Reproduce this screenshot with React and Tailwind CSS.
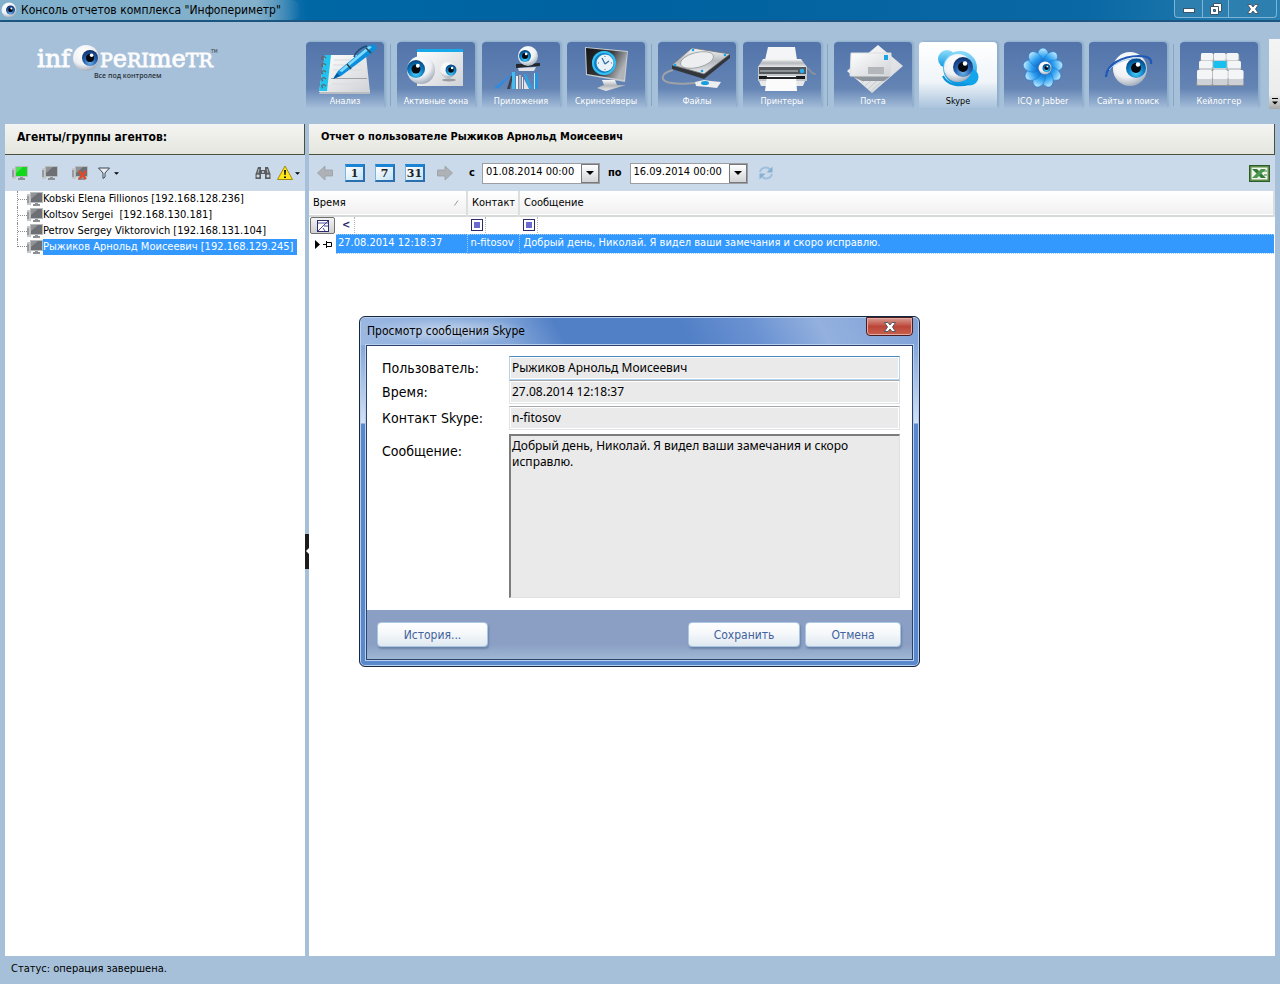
import React, { useState } from 'react'
import clsx from 'clsx'

const agents = [
  'Kobski Elena Fillionos [192.168.128.236]',
  'Koltsov Sergei  [192.168.130.181]',
  'Petrov Sergey Viktorovich [192.168.131.104]',
  'Рыжиков Арнольд Моисеевич [192.168.129.245]',
]

// Shared gradients for all the drawings
const Gradients = () => (
  <svg className="absolute w-0 h-0" aria-hidden="true">
    <defs>
      <radialGradient id="ball" cx="0.4" cy="0.3" r="0.75">
        <stop offset="0" stopColor="#ffffff" />
        <stop offset="0.6" stopColor="#eef0f3" />
        <stop offset="1" stopColor="#98a4b4" />
      </radialGradient>
      <radialGradient id="iris" cx="0.5" cy="0.75" r="0.75">
        <stop offset="0" stopColor="#4fd0f8" />
        <stop offset="0.5" stopColor="#0c82c8" />
        <stop offset="1" stopColor="#063f78" />
      </radialGradient>
      <radialGradient id="irisDark" cx="0.5" cy="0.8" r="0.8">
        <stop offset="0" stopColor="#6aaee8" />
        <stop offset="0.5" stopColor="#2560ac" />
        <stop offset="1" stopColor="#0e2d68" />
      </radialGradient>
      <linearGradient id="paper" x1="0" y1="0" x2="1" y2="1">
        <stop offset="0" stopColor="#ffffff" />
        <stop offset="1" stopColor="#cfd2d6" />
      </linearGradient>
      <linearGradient id="metal" x1="0" y1="0" x2="0" y2="1">
        <stop offset="0" stopColor="#fafafa" />
        <stop offset="0.5" stopColor="#b4b8bc" />
        <stop offset="1" stopColor="#e8eaec" />
      </linearGradient>
      <linearGradient id="screen" x1="0" y1="0" x2="1" y2="0.4">
        <stop offset="0" stopColor="#101214" />
        <stop offset="0.6" stopColor="#3a3d40" />
        <stop offset="1" stopColor="#b0b4b8" />
      </linearGradient>
      <linearGradient id="blue" x1="0" y1="0" x2="0" y2="1">
        <stop offset="0" stopColor="#8fdcfa" />
        <stop offset="1" stopColor="#0796e2" />
      </linearGradient>
      <linearGradient id="petal" x1="0" y1="0" x2="0" y2="1">
        <stop offset="0" stopColor="#c4ecff" />
        <stop offset="0.5" stopColor="#2c9ff0" />
        <stop offset="1" stopColor="#0c58b8" />
      </linearGradient>
    </defs>
  </svg>
)

const Eye = ({ x, y, r, dx = 0, dy = 0, ir, dark }) => (
  <g>
    <circle cx={x} cy={y} r={r} fill="url(#ball)" />
    <circle cx={x + dx} cy={y + dy} r={ir} fill={dark ? 'url(#irisDark)' : 'url(#iris)'} />
    <circle cx={x + dx} cy={y + dy} r={ir * 0.5} fill="#06090f" />
    <circle cx={x + dx + ir * 0.2} cy={y + dy - ir * 0.35} r={ir * 0.22} fill="#fff" />
  </g>
)

const NotebookIcon = () => (
  <g>
    <path d="M15 47 L64 47 L64 51 L13 51 Z" fill="#b9bcc0" />
    <path d="M19 12 L60 12 L64 49 L13 49 Z" fill="url(#paper)" />
    <path d="M19 12 H25 L21 48 H13 Z" fill="#1fc3ee" />
    <path d="M28 17H54M27 22H55M27 27H56M26 41H58" stroke="#d8dbdf" strokeWidth="1" />
    <path d="M25 35.500H61" stroke="#9ea2a6" />
    {[15, 22, 29, 36, 43].map((y) => (
      <path key={y} d={`M20 ${y} c-3 -3 -6 0 -3 2`} fill="none" stroke="#5f656b" strokeWidth="1.300" />
    ))}
    <path d="M27 36 L32 28 L62 3 L68 1 L71 5 L67 9 L35 33 Z" fill="#0b8fdd" />
    <path d="M33 28 L63 3 L66 4 L36 29 Z" fill="#7fdcff" />
    <path d="M27 36 L31 30 L34 33 Z" fill="#085a9e" />
    <path d="M41 21 L45 26 M60 5 L65 10" stroke="#34404c" strokeWidth="1.500" />
    <path d="M48 14 C50 8 56 4 61 3" stroke="#1d4c78" strokeWidth="1.500" fill="none" />
  </g>
)

const WindowsIcon = () => (
  <g>
    <rect x="20" y="6" width="46" height="37" fill="url(#paper)" />
    <rect x="20" y="6" width="46" height="3" fill="#17a9ea" />
    <ellipse cx="52" cy="37" rx="7" ry="1.500" fill="#9a9da1" />
    <Eye x={24} y={27} r={14} dx={-5} dy={-1} ir={9} />
    <Eye x={51} y={27} r={8} dx={3} ir={5.5} />
  </g>
)

const AppsIcon = () => (
  <g>
    <path d="M34 21 L58 20 L58 23 L34 25 Z" fill="#23272c" />
    <path d="M36 25 L54 24 L52 28 L37 28 Z" fill="#e0e2e5" />
    <Eye x={46} y={13} r={10} dx={-3} ir={6} />
    <path d="M30 30 L32 29 L17 45 L13 46 L13 44 Z" fill="#2f8be0" />
    <path d="M25 46 L29 33 L31 33 L28 46 Z" fill="#3a3f48" />
    <path d="M30 29 H33 V46 H30 Z" fill="#43bdf0" />
    <path d="M34 33 H36 V46 H34 Z" fill="#f1f3f5" />
    <path d="M37 32 H39 V46 H37 Z" fill="#c7b7ad" />
    <path d="M40 34 H41 V46 H40 Z" fill="#f1f3f5" />
    <path d="M42 31 L44 31 L50 45 L47 46 Z" fill="#2aa4e8" />
    <path d="M42 36 L47 46 L42 46 Z" fill="#dfe3e8" />
    <path d="M52 30 H56 V46 H52 Z" fill="#2494dc" />
    <path d="M52 30 H53 V46 H52 Z" fill="#bfe9fb" />
  </g>
)

const ScreenIcon = () => (
  <g>
    <path d="M35 37 L48 37 L50 42 L59 42 L39 48 L30 45 L37 42 Z" fill="url(#metal)" />
    <path d="M18 4 L61 8 L58 39 L19 32 Z" fill="#c9ccd0" />
    <path d="M19 5 L60 9 L57 37 L20 31 Z" fill="url(#screen)" />
    <circle cx="37" cy="20" r="12" fill="#0e7fc4" />
    <circle cx="37" cy="20" r="11" fill="none" stroke="#36c0f2" strokeWidth="2" />
    <circle cx="38" cy="20" r="8.500" fill="#e9f2f8" />
    <path d="M38 21 L35 15 M38 21 L42 18" stroke="#2f6ca0" strokeWidth="1.300" />
    <path d="M38 13V14M38 26V27M31 20H32M44 20H45" stroke="#5c6b78" />
  </g>
)

const DriveIcon = () => (
  <g>
    <path d="M15 27 C2 30 1 39 14 40 C24 42 29 40 38 40" fill="none" stroke="#9fa3a8" strokeWidth="2" />
    <path d="M14 22 L46 30 L72 11 V15 L46 36 L14 26 Z" fill="#33373b" />
    <path d="M34 5 L72 11 L46 31 L14 22 Z" fill="url(#metal)" />
    <path d="M34 5 L72 11 L46 31 L14 22 Z" fill="none" stroke="#6e7378" strokeWidth="0.800" />
    <ellipse cx="39" cy="17" rx="17" ry="7.500" fill="#eceeef" stroke="#8e9296" strokeWidth="0.700" transform="rotate(-14 39 17)" />
    <circle cx="35" cy="7" r="1.300" fill="#15a5ea" />
    <circle cx="67" cy="12" r="1.300" fill="#15a5ea" />
    <circle cx="17" cy="22" r="1.300" fill="#15a5ea" />
    <circle cx="44" cy="28" r="1.300" fill="#15a5ea" />
    <path d="M37 39 L46 37 L53 38 L63 39 L59 45 L50 44 L38 43 Z" fill="#eceef0" />
    <ellipse cx="47" cy="40" rx="4" ry="2" fill="#169fe0" />
  </g>
)

const PrinterIcon = () => (
  <g>
    <path d="M62 27 C68 22 66 32 73 31" fill="none" stroke="#8c939b" strokeWidth="1.500" />
    <path d="M25 4 H52 L54 17 H22 Z" fill="#f4f5f6" />
    <path d="M20 16 H58 L64 24 H15 Z" fill="url(#metal)" />
    <path d="M15 24 H64 V38 H15 Z" fill="#c4c7ca" />
    <path d="M16 24 H63 V31 H16 Z" fill="#53575b" />
    <path d="M17 27 H55 V29 H17 Z" fill="#8d9296" />
    <circle cx="59" cy="28" r="2.200" fill="#25b0f0" />
    <path d="M16 33 H24 V36 H16 Z M53 33 H62 V36 H53 Z" fill="#17191b" />
    <path d="M16 38 H62 L60 43 H18 Z" fill="#e6e8ea" />
    <path d="M24 33 H53 L54 48 H22 Z" fill="#fbfbfc" />
    <path d="M23 34 H54 V36 H23 Z" fill="#24272a" />
  </g>
)

const MailIcon = () => (
  <g>
    <path d="M44 2 L69 23 L38 50 L13 28 Z" fill="url(#paper)" />
    <path d="M28 40L35 33M31 43L41 34M34 46L47 34M37 48L53 34" stroke="#c9ccd0" />
    <path d="M17 33 H57 L50 38 H28 Z" fill="#8f959c" />
    <path d="M17 10 H57 V33 H16 Z" fill="url(#paper)" />
    <path d="M17 10 H57 V33 H16 Z" fill="none" stroke="#dcdfe2" />
    <rect x="50" y="12" width="4" height="5" fill="#1aa5e6" />
    <rect x="34" y="24" width="16" height="7" fill="#b3b7bb" />
  </g>
)

const SkypeIcon = () => (
  <g>
    <circle cx="28" cy="16" r="9" fill="url(#blue)" />
    <circle cx="41" cy="25" r="17" fill="url(#blue)" />
    <circle cx="51" cy="34" r="8.500" fill="#12a5ec" />
    <path d="M24 33 C28 42 40 44 50 41" stroke="#0b93da" strokeWidth="2" fill="none" />
    <Eye x={39} y={25} r={14} dx={5} dy={-1} ir={10} dark />
  </g>
)

const FlowerIcon = () => (
  <g>
    {[0, 40, 80, 120, 160, 200, 240, 280, 320].map((a) => (
      <ellipse key={a} cx="39" cy="14" rx="6" ry="9" fill="url(#petal)" stroke="#1a78cc" strokeWidth="0.500" transform={`rotate(${a} 39 25)`} />
    ))}
    <Eye x={41} y={25} r={6.5} dx={1.5} ir={4} />
  </g>
)

const BrowserIcon = () => (
  <g>
    <Eye x={41} y={26} r={17} dx={6} dy={-1} ir={10} />
    <path d="M17 34 C17 22 33 13 50 13 C58 13 63 15 62 21" fill="none" stroke="#1e58b4" strokeWidth="2.200" />
    <path d="M20 27 C26 19 40 15 52 15" fill="none" stroke="#9cc8f4" strokeWidth="0.900" />
  </g>
)

const KeyboardIcon = () => (
  <g>
    <path d="M21 11 H59 L64 43 H16 Z" fill="#8d9399" />
    {[0, 1, 2].map((row) => [0, 1, 2].map((col) => {
      const w = 12 + row * 1.5
      const x = 21 - row * 2 + col * (w + 0.7)
      const y = 10 + row * 8 + (row === 2 ? 1 : 0)
      return (
        <g key={row + '-' + col}>
          <rect x={x} y={y} width={w} height={row === 2 ? 15 : 9} rx="1.500" fill="#cdd0d4" />
          <rect x={x} y={y} width={w} height={row === 2 ? 9 : 7} rx="1.500" fill={row === 1 && col === 1 ? '#19c0ee' : '#f4f5f6'} />
        </g>
      )
    }))}
  </g>
)

const groups = [
  [{ name: 'Анализ', Icon: NotebookIcon }],
  [
    { name: 'Активные окна', Icon: WindowsIcon },
    { name: 'Приложения', Icon: AppsIcon },
    { name: 'Скринсейверы', Icon: ScreenIcon },
  ],
  [
    { name: 'Файлы', Icon: DriveIcon },
    { name: 'Принтеры', Icon: PrinterIcon },
  ],
  [
    { name: 'Почта', Icon: MailIcon },
    { name: 'Skype', Icon: SkypeIcon },
    { name: 'ICQ и Jabber', Icon: FlowerIcon },
    { name: 'Сайты и поиск', Icon: BrowserIcon },
  ],
  [{ name: 'Кейлоггер', Icon: KeyboardIcon }],
]

const Computer = ({ screen = '#6c6f73', cross }) => (
  <svg className="w-4 h-4 shrink-0" viewBox="0 0 16 16" aria-hidden="true">
    <path d="M0 3H4V14H0Z" fill="#c5c8ca" />
    <path d="M1 5V12" stroke="#6d7174" />
    <rect x="3" y="1" width="13" height="11" fill="#b9bcbe" />
    <rect x="4" y="2" width="11" height="9" fill={screen} />
    <path d="M4 2H11L4 8Z" fill="#fff" opacity="0.250" />
    <path d="M8 12H11V13H13V15H6V13H8Z" fill="#8e9194" />
    {cross && <path d="M7 6L14 14M14 6L7 14" stroke="#e04a2c" strokeWidth="2.400" />}
  </svg>
)

const Caret = ({ className }) => (
  <svg className={clsx('shrink-0', className)} viewBox="0 0 6 3" aria-hidden="true">
    <path d="M0 0H6L3 3Z" fill="#000" />
  </svg>
)

const BigArrow = ({ flip }) => (
  <svg className={clsx('w-4 h-4', flip && 'rotate-180')} viewBox="0 0 16 16" aria-hidden="true">
    <path d="M0.500 8L8 1V5H15.500V11H8V15Z" fill="#aeb2b6" stroke="#9ba0a5" strokeWidth="0.800" />
  </svg>
)

const CalendarButton = ({ days }) => (
  <button className="w-5 h-[18px] border border-[#7cb4dc] border-t-[3px] border-t-[#1c84d2] border-r-2 border-r-[#2b6fae] border-b-2 border-b-[#2b6fae] bg-gradient-to-br from-white to-[#c2e2f6] font-['DejaVu_Serif',serif] font-bold text-[11px] leading-[13px] text-[#222]">
    {days}
  </button>
)

const DateBox = ({ id, value }) => (
  <div className="flex w-[118px] h-[21px] border border-[#9b9fa4] bg-white">
    <input id={id} defaultValue={value} className="min-w-0 flex-1 pl-[3px] pb-px outline-none" />
    <button aria-label="Открыть календарь" className="w-[18px] border border-[#77797c] bg-gradient-to-b from-white to-[#d2d4d6] flex items-center justify-center">
      <Caret className="w-2 h-1" />
    </button>
  </div>
)

const FilterMark = () => (
  <svg className="w-3 h-3" viewBox="0 0 12 12" aria-hidden="true">
    <rect x="0.500" y="0.500" width="11" height="11" fill="#fff" stroke="#2c2c6c" />
    <rect x="3" y="3" width="6" height="6" fill="#6a6ad0" />
  </svg>
)

const Logo = () => (
  <svg className="w-[190px] h-10" viewBox="0 0 190 40" role="img" aria-label="Инфопериметр">
    <g fill="#ffffff" stroke="#fafafa" strokeWidth="0.900" fontFamily="'DejaVu Serif', serif">
      <text x="1" y="26" fontSize="25">inf</text>
      <text x="64" y="26" fontSize="19">
        P<tspan fontSize="24">e</tspan>RI<tspan fontSize="24">me</tspan>TR
      </text>
    </g>
    <Eye x={50} y={17} r={13} dx={4} ir={8} dark />
    <text x="175" y="12" fontSize="5" fontFamily="'DejaVu Sans Condensed', sans-serif" fill="#333">TM</text>
    <text x="58" y="37" fontSize="7" fontFamily="'Open Sans', sans-serif" fontWeight="600" fill="#2b3038">Все под контролем</text>
  </svg>
)

const TitleBar = () => (
  <header className="flex items-start h-[22px] bg-[linear-gradient(to_right,#4d94be_0%,#3c86b4_20%,#0067a5_24%,#0062a0_50%,#0a68a4_85%,#2a80b0_100%)] border-b-2 border-b-[#1c5680]">
    <div className="flex items-center h-5 pl-px gap-1 pr-5 bg-[linear-gradient(to_right,#80b0cc,#83b0cb_85%,transparent)] rounded-r-full text-[12px] text-black">
      <svg className="w-4 h-4" viewBox="0 0 16 16" aria-hidden="true">
        <Eye x={8} y={8} r={7.5} dx={1.5} ir={4.5} dark />
      </svg>
      <h1>Консоль отчетов комплекса "Инфопериметр"</h1>
    </div>
    <div className="ml-auto mr-[3px] flex h-[18px] border border-t-0 border-[#7fb4d4] rounded-b-[4px] divide-x divide-[#7fb4d4] bg-[#2d7fb0]">
      <button aria-label="Свернуть" className="w-7 flex items-center justify-center">
        <svg className="w-3 h-4" viewBox="0 0 12 16"><rect x="0.500" y="7.500" width="11" height="4" fill="#fff" stroke="#3d5468" /></svg>
      </button>
      <button aria-label="Восстановить" className="w-[26px] flex items-center justify-center">
        <svg className="w-3 h-4" viewBox="0 0 12 16">
          <path d="M3.500 2.500H11.500V10.500H3.500Z" fill="#fff" stroke="#3d5468" />
          <path d="M0.500 5.500H8.500V13.500H0.500Z" fill="#fff" stroke="#3d5468" />
          <path d="M3.500 8.500H5.500V10.500H3.500Z" fill="#2d7fb0" stroke="#3d5468" />
        </svg>
      </button>
      <button aria-label="Закрыть" className="w-[47px] flex items-center justify-center">
        <CloseGlyph />
      </button>
    </div>
  </header>
)

const CloseGlyph = () => (
  <svg className="w-3 h-2.5" viewBox="0 0 12 10" aria-hidden="true">
    <path d="M0.500 0.500H4L6 3L8 0.500H11.500L8.500 5L11.500 9.500H8L6 7L4 9.500H0.500L3.500 5Z" fill="#fff" stroke="#46525e" strokeWidth="0.900" />
  </svg>
)

const MainMenu = ({ active, onSelect }) => (
  <div className="flex items-start h-[102px] pt-[17px]">
    <div className="w-[306px] shrink-0 pl-9 pt-0.5">
      <Logo />
    </div>
    <nav className="flex gap-1.5 pt-[3px]">
      {groups.map((group, i) => (
        <React.Fragment key={i}>
          {i > 0 && <div className="w-px h-[62px] mt-0.5 bg-[#85a5c5]" />}
          <div className="flex gap-[7px]">
            {group.map(({ name, Icon }) => (
              <button
                key={name}
                onClick={() => onSelect(name)}
                className={clsx(
                  'w-[78px] h-[66px] rounded-t-[4px] text-[9px] leading-3 bg-gradient-to-b shadow-[2px_-1px_2px_#8fadca]',
                  active === name
                    ? 'from-white via-[#f0f5f9] via-60% to-[#a9c3dc] text-black'
                    : 'from-[#5274aa] via-[#6484b4] via-70% to-[#a4bdd8] text-white'
                )}
              >
                <svg className="block w-[78px] h-[52px]" viewBox="0 0 78 52" aria-hidden="true">
                  <Icon />
                </svg>
                <span className="block whitespace-nowrap">{name}</span>
              </button>
            ))}
          </div>
        </React.Fragment>
      ))}
    </nav>
    <button aria-label="Ещё" className="ml-auto w-[11px] h-[70px] bg-gradient-to-b from-[#f4f4f4] via-[#ececec] via-80% to-[#a8a8a8] flex flex-col items-center justify-end gap-0.5 pb-1">
      <span className="w-1.5 h-px bg-black" />
      <Caret className="w-1.5 h-1" />
    </button>
  </div>
)

const PanelTitle = ({ className, children }) => (
  <h2 className={clsx('h-[31px] pl-3 pb-1 flex items-center bg-gradient-to-b from-[#f4f4f2] to-[#e4e6de] border-b border-r border-[#4c503c] font-bold text-black', className)}>
    {children}
  </h2>
)

const AgentsPanel = () => {
  const [selected, setSelected] = useState(3)

  return (
    <aside className="w-[300px] shrink-0 flex flex-col bg-white">
      <PanelTitle className="text-[12px]">Агенты/группы агентов:</PanelTitle>
      <div className="flex items-center h-9 pl-[7px] pr-[5px] bg-[#cbdaea]">
        <div className="flex gap-3.5">
          <button aria-label="Включенные"><Computer screen="#12d81c" /></button>
          <button aria-label="Выключенные"><Computer /></button>
          <button aria-label="Удалить"><Computer cross /></button>
        </div>
        <button aria-label="Фильтр" className="ml-2.5 flex items-center gap-1">
          <svg className="w-3 h-3" viewBox="0 0 12 12" aria-hidden="true">
            <path d="M0.500 1H11.500L7 6V10L5 11.500V6Z" fill="#e8eef4" stroke="#3d4650" />
          </svg>
          <Caret className="w-[5px] h-[3px]" />
        </button>
        <button aria-label="Поиск" className="ml-auto mr-1.5">
          <svg className="w-4 h-4" viewBox="0 0 16 16" aria-hidden="true">
            <path d="M3 2H6V5H10V2H13L15.500 9V14H10V9H6V14H0.500V9Z" fill="#5a5e62" />
            <path d="M2 10H4V12H2Z M12 10H14V12H12Z M4 4L3 8M12 4L13 8" fill="#e3e6e8" stroke="#c9cdd1" strokeWidth="0.800" />
            <circle cx="8" cy="7" r="1" fill="#d7dade" />
          </svg>
        </button>
        <button aria-label="Предупреждения" className="flex items-center gap-0.5">
          <svg className="w-4 h-4" viewBox="0 0 16 16" aria-hidden="true">
            <path d="M8 1L15.500 14.500H0.500Z" fill="#ffe51e" stroke="#a08a10" strokeLinejoin="round" />
            <path d="M7 5H9L8.600 10H7.400Z M7 11.500H9V13H7Z" fill="#111" />
          </svg>
          <Caret className="w-[5px] h-[3px]" />
        </button>
      </div>
      <ul className="flex-1 pl-3 text-[11px]">
        {agents.map((agent, i) => (
          <li key={agent} className="flex items-center h-4">
            <span className={clsx('w-2.5 border-l border-dotted border-[#8c8c8c] flex', i === agents.length - 1 ? 'h-2 self-start items-end' : 'h-4 items-center')}>
              <span className="w-full border-t border-dotted border-[#8c8c8c]" />
            </span>
            <Computer />
            <button
              onClick={() => setSelected(i)}
              className={clsx('h-4 pr-1 whitespace-pre leading-[14px]', selected === i ? 'bg-[#3399ff] text-white' : 'text-black')}
            >
              {agent}
            </button>
          </li>
        ))}
      </ul>
    </aside>
  )
}

const ReportToolbar = () => (
  <div className="flex items-center h-9 pl-2 pr-[5px] bg-[#cbdaea] text-[11px] text-black">
    <button aria-label="Назад"><BigArrow /></button>
    <div className="flex gap-2.5 ml-3 mr-3">
      <CalendarButton days="1" />
      <CalendarButton days="7" />
      <CalendarButton days="31" />
    </div>
    <button aria-label="Вперед"><BigArrow flip /></button>
    <label htmlFor="from" className="ml-4 mr-[7px] font-bold">с</label>
    <DateBox id="from" value="01.08.2014 00:00" />
    <label htmlFor="to" className="mx-2 font-bold">по</label>
    <DateBox id="to" value="16.09.2014 00:00" />
    <button aria-label="Обновить" className="ml-2.5">
      <svg className="w-4 h-4" viewBox="0 0 16 16" fill="none" aria-hidden="true">
        <path d="M2 7C3 2.500 9 1 12 4.500M14 9C13 13.500 7 15 4 11.500" stroke="#9fc0dc" strokeWidth="2" />
        <path d="M14.500 1.500V7.500H8.500Z M1.500 14.500V8.500H7.500Z" fill="#86afd2" />
      </svg>
    </button>
    <button aria-label="Экспорт в Excel" className="ml-auto">
      <svg className="w-[21px] h-[17px]" viewBox="0 0 21 17" aria-hidden="true">
        <rect width="21" height="17" fill="#2c5c28" />
        <rect x="1" y="1" width="19" height="15" fill="#5d8a48" />
        <rect x="2.500" y="2.500" width="16" height="12" fill="#f0f6ec" />
        <path d="M3 4H8L17 13H12Z" fill="#2f7c3a" />
        <path d="M17 4H12L3 13H8Z" fill="#4c9850" />
        <path d="M14 6H18M15 10H18" stroke="#2f7c3a" />
      </svg>
    </button>
  </div>
)

const ReportTable = () => (
  <table className="w-full table-fixed border-collapse text-[11px] text-black">
    <colgroup>
      <col className="w-[27px]" />
      <col className="w-[131px]" />
      <col className="w-[52px]" />
      <col />
    </colgroup>
    <thead>
      <tr className="h-[25px] bg-gradient-to-b from-white to-[#f0f0f0] text-left border-b-2 border-b-[#d5dad8]">
        <th colSpan={2} className="font-normal pl-1 pr-1.5 border-r-2 border-r-[#dcdfde]">
          <button className="flex w-full items-center justify-between">
            Время
            <svg className="w-1.5 h-1.5" viewBox="0 0 6 6" aria-hidden="true">
              <path d="M0.500 5.500L4 0.500" stroke="#808080" strokeWidth="0.800" />
            </svg>
          </button>
        </th>
        <th className="font-normal pl-1 border-r-2 border-r-[#dcdfde] whitespace-nowrap">Контакт</th>
        <th className="font-normal pl-1 border-r-2 border-r-[#dcdfde]">Сообщение</th>
      </tr>
    </thead>
    <tbody>
      <tr className="h-[18px]">
        <td className="p-0">
          <button aria-label="Фильтр" className="ml-px w-[25px] h-[17px] flex items-center justify-center border border-[#707070] rounded-[2px] bg-gradient-to-b from-[#f4f4f4] to-[#d0d0d0]">
            <svg className="w-3 h-3" viewBox="0 0 12 12" aria-hidden="true">
              <rect x="0.500" y="0.500" width="11" height="11" fill="#fff" stroke="#2c2c6c" />
              <path d="M1 3H11M1 11L11 1M7 6H11M6 8L8 11" stroke="#4a4a9c" />
            </svg>
          </button>
        </td>
        <td className="p-0"><span className="block w-[19px] h-4 pl-1.5 leading-4 font-bold text-[#2c2c6c] border-r border-dotted border-[#b4b4b4]">&lt;</span></td>
        <td className="p-0"><span className="flex items-center w-[19px] h-4 pl-1 border-r border-dotted border-[#b4b4b4]"><FilterMark /></span></td>
        <td className="p-0"><span className="flex items-center w-[19px] h-4 pl-1 border-r border-dotted border-[#b4b4b4]"><FilterMark /></span></td>
      </tr>
      <tr className="h-[19px] text-white">
        <td className="p-0">
          <svg className="ml-[5px] w-[19px] h-2.5" viewBox="0 0 19 10" aria-hidden="true">
            <path d="M1 1L6 5.500L1 10Z" fill="#000" />
            <path d="M9 5.500H12M12.500 2V9M12.500 3.500H17.500V7.500H12.500" stroke="#000" fill="none" />
          </svg>
        </td>
        <td className="p-0 pl-0.5 whitespace-nowrap bg-[#3399ff] border-y border-r border-dotted border-[#9fcdfb]">27.08.2014 12:18:37</td>
        <td className="p-0 pl-[3px] whitespace-nowrap bg-[#3399ff] border-y border-r border-dotted border-[#9fcdfb]">n-fitosov</td>
        <td className="p-0 pl-1 bg-[#3399ff] border-y border-dotted border-[#9fcdfb]">Добрый день, Николай. Я видел ваши замечания и скоро исправлю.</td>
      </tr>
    </tbody>
  </table>
)

const DialogButton = ({ className, children }) => (
  <button className={clsx('h-[25px] rounded-[4px] border border-[#a9c6e2] bg-gradient-to-b from-white via-[#f4f7fa] to-[#dfe8f0] shadow-[1px_2px_2px_#6c83a8] text-[12px] text-[#41629c]', className)}>
    {children}
  </button>
)

const Field = ({ id, label, value, className, inputClass }) => (
  <div className={clsx('flex items-center', className)}>
    <label htmlFor={id} className="w-[127px] shrink-0 text-[14px]">{label}</label>
    <input
      id={id}
      readOnly
      defaultValue={value}
      className={clsx("flex-1 min-w-0 h-6 pl-0.5 pb-0.5 border bg-[#eaeaea] shadow-[inset_0_0_0_1px_#fff] font-['Noto_Sans',sans-serif] text-[12px] outline-none", inputClass)}
    />
  </div>
)

const MessageDialog = ({ onClose }) => (
  <div
    role="dialog"
    aria-labelledby="dialog-title"
    className="absolute left-[359px] top-[316px] w-[561px] px-1.5 pb-1.5 border border-[#17283e] rounded-[6px] shadow-[inset_0_0_0_1px_#b9d0ee] text-black bg-[linear-gradient(to_bottom,#8eb0de_0px,#86a8da_30px,#d3e1f4_106px,#5a88cc_107px)]"
  >
    <div className="-mx-[5px] mt-px px-[5px] h-[27px] flex items-start rounded-t-[5px] bg-[linear-gradient(60deg,#9cb8e2_0%,#86a9da_26%,#5280c6_36%,#5280c6_58%,#6a92d2_70%,#93b0de_82%,#80a2d8_100%)]">
      <h2 id="dialog-title" className="text-[12px] leading-[26px] -ml-[5px] px-1.5 rounded-full bg-[radial-gradient(closest-side,#c4d5ec,transparent)]">Просмотр сообщения Skype</h2>
      <button
        aria-label="Закрыть"
        onClick={onClose}
        className="ml-auto w-[47px] h-[19px] -mt-px flex items-center justify-center rounded-b-[4px] border border-[#4a1c20] bg-gradient-to-b from-[#d99a92] via-[#bb4538] via-50% to-[#c8604c] shadow-[inset_0_0_0_1px_#e2aaa2]"
      >
        <CloseGlyph />
      </button>
    </div>
    <div className="border border-[#2a426c] bg-white shadow-[0_0_0_1px_#b9d0ee]">
      <div className="pl-[15px] pr-3 pt-2.5 pb-3">
        <Field id="user" label="Пользователь:" value="Рыжиков Арнольд Моисеевич" inputClass="border-[#b4d4ec] border-t-[#4a8cbc]" />
        <Field id="time" label="Время:" value="27.08.2014 12:18:37" inputClass="border-[#e0e2e8] border-t-[#a8aab2]" />
        <Field id="contact" label="Контакт Skype:" value="n-fitosov" className="mt-0.5" inputClass="border-[#e0e2e8] border-t-[#a8aab2]" />
        <div className="flex mt-1">
          <label htmlFor="message" className="w-[127px] shrink-0 pt-[7px] text-[14px]">Сообщение:</label>
          <textarea
            id="message"
            readOnly
            defaultValue="Добрый день, Николай. Я видел ваши замечания и скоро исправлю."
            className="flex-1 min-w-0 h-[164px] pl-px pr-6 pt-0.5 resize-none border border-[#e0e0e0] border-t-2 border-t-[#7c7c7c] border-l-2 border-l-[#7c7c7c] bg-[#eaeaea] font-['Noto_Sans',sans-serif] text-[12px] leading-4 outline-none"
          />
        </div>
      </div>
      <div className="flex pl-2.5 pr-[11px] py-3 bg-gradient-to-b from-[#8b9fc4] via-[#8b9fc4] via-70% to-[#9fb8d4]">
        <DialogButton className="w-[111px]">История...</DialogButton>
        <DialogButton className="w-28 ml-auto mr-[5px]">Сохранить</DialogButton>
        <DialogButton className="w-24">Отмена</DialogButton>
      </div>
    </div>
  </div>
)

const App = () => {
  const [section, setSection] = useState('Skype')
  const [dialogOpen, setDialogOpen] = useState(true)

  return (
    <div className="relative min-h-screen flex flex-col bg-[#a6c0da] font-['DejaVu_Sans_Condensed','DejaVu_Sans',sans-serif]">
      <Gradients />
      <TitleBar />
      <MainMenu active={section} onSelect={setSection} />

      <div className="flex-1 flex px-[5px]">
        <AgentsPanel />
        <div className="w-1 shrink-0 flex items-center pt-[22px]">
          <button aria-label="Скрыть панель" className="w-1 h-[35px] bg-[#1c1c1c] flex items-center justify-end">
            <svg className="w-[3px] h-1.5" viewBox="0 0 3 6" aria-hidden="true"><path d="M3 0V6L0 3Z" fill="#fff" /></svg>
          </button>
        </div>
        <main className="flex-1 min-w-0 bg-white">
          <PanelTitle className="text-[11px]">Отчет о пользователе Рыжиков Арнольд Моисеевич</PanelTitle>
          <ReportToolbar />
          <ReportTable />
        </main>
      </div>

      <footer className="h-7 pl-[11px] flex items-center pb-0.5 text-[11px] text-black">Статус: операция завершена.</footer>

      {dialogOpen && <MessageDialog onClose={() => setDialogOpen(false)} />}
    </div>
  )
}

export default App
